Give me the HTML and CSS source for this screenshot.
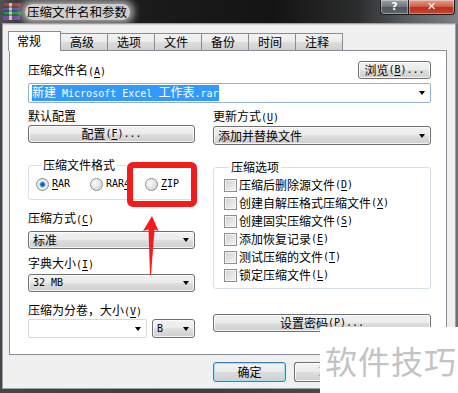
FILE: index.html
```html
<!DOCTYPE html>
<html lang="zh-CN">
<head>
    <meta charset="UTF-8">
    <title>压缩文件名和参数</title>
    <link rel="stylesheet" href="styles.css">
</head>
<body>
    <div class="window">
        <div class="titlebar">
            <svg class="app-icon" width="19" height="17" viewBox="0 0 19 17">
                <rect x="1" y="0" width="17" height="4" fill="#a8443a"/>
                <rect x="0" y="4" width="17" height="4" fill="#3f5fc0"/>
                <rect x="1" y="8" width="17" height="4" fill="#2f9446"/>
                <rect x="0" y="12" width="17" height="5" fill="#7a4aa8"/>
                <rect x="6" y="0" width="3" height="17" fill="#e8d9a0" opacity="0.85"/>
                <path d="M0 4h17M1 8h17M0 12h17" stroke="#222" stroke-width="0.7"/>
            </svg>
            <span class="title">压缩文件名和参数</span>
            <div class="caption">
                <span class="cap-btn help">?</span>
                <span class="cap-btn close">✕</span>
            </div>
        </div>

        <div class="client">
            <div class="tabs">
                <div class="tab active">常规</div>
                <div class="tab">高级</div>
                <div class="tab">选项</div>
                <div class="tab">文件</div>
                <div class="tab">备份</div>
                <div class="tab">时间</div>
                <div class="tab">注释</div>
            </div>

            <div class="panel">
                <div class="name-row">
                    <span class="label">压缩文件名<span class="m">(<u>A</u>)</span></span>
                    <div class="btn browse">浏览<span class="m">(<u>B</u>)...</span></div>
                </div>
                <div class="combo edit focus">
                    <span class="sel">新建<span class="m"> Microsoft Excel </span>工作表<span class="m">.rar</span></span>
                    <span class="arrow"></span>
                </div>

                <div class="cols">
                    <div class="col">
                        <div class="label first">默认配置</div>
                        <div class="btn profile">配置<span class="m">(<u>F</u>)...</span></div>

                        <fieldset class="group format">
                            <legend>压缩文件格式</legend>
                            <div class="radios">
                                <span class="radio-item w54"><span class="radio on"></span><span class="m"><u>R</u>AR</span></span>
                                <span class="radio-item w55"><span class="radio"></span><span class="m">RAR<u>4</u></span></span>
                                <span class="radio-item"><span class="radio"></span><span class="m"><u>Z</u>IP</span></span>
                            </div>
                        </fieldset>

                        <div class="label after-group">压缩方式<span class="m">(<u>C</u>)</span></div>
                        <div class="combo drop">标准<span class="arrow"></span></div>

                        <div class="label mid">字典大小<span class="m">(<u>I</u>)</span></div>
                        <div class="combo drop tight"><span class="m">32 MB</span><span class="arrow"></span></div>

                        <div class="label after-dict">压缩为分卷，大小<span class="m">(<u>V</u>)</span></div>
                        <div class="volume-row">
                            <div class="combo edit plain vol"><span class="arrow"></span></div>
                            <div class="combo drop unit"><span class="m">B</span><span class="arrow"></span></div>
                        </div>
                    </div>

                    <div class="col">
                        <div class="label first">更新方式<span class="m">(<u>U</u>)</span></div>
                        <div class="combo drop update">添加并替换文件<span class="arrow"></span></div>

                        <fieldset class="group options">
                            <legend>压缩选项</legend>
                            <div class="check-row"><span class="check"></span>压缩后删除源文件<span class="m">(<u>D</u>)</span></div>
                            <div class="check-row"><span class="check"></span>创建自解压格式压缩文件<span class="m">(<u>X</u>)</span></div>
                            <div class="check-row"><span class="check"></span>创建固实压缩文件<span class="m">(<u>S</u>)</span></div>
                            <div class="check-row"><span class="check"></span>添加恢复记录<span class="m">(<u>E</u>)</span></div>
                            <div class="check-row"><span class="check"></span>测试压缩的文件<span class="m">(<u>T</u>)</span></div>
                            <div class="check-row"><span class="check"></span>锁定压缩文件<span class="m">(<u>L</u>)</span></div>
                        </fieldset>

                        <div class="btn password">设置密码<span class="m">(<u>P</u>)...</span></div>
                    </div>
                </div>
            </div>

            <!-- the rest of the row is hidden under the watermark -->
            <div class="dialog-btns">
                <div class="btn dlg default">确定</div>
                <div class="btn dlg cancel">取消</div>
            </div>
        </div>

        <!-- annotation drawn over the screenshot -->
        <div class="highlight"></div>
        <svg class="pointer" width="20" height="62" viewBox="0 0 20 62">
            <polygon points="10,0 16.5,15 12.5,13.5 9,59 8,59 6.5,13.5 1,15" fill="#f21c1c"/>
        </svg>
        <div class="watermark">软件技巧</div>
    </div>
</body>
</html>
```

FILE: styles.css
```css
* {
    box-sizing: border-box;
}

body {
    margin: 0;
    width: 458px;
    height: 393px;
    overflow: hidden;
    font-family: "Noto Sans CJK SC", sans-serif;
    font-size: 12px;
    line-height: 14px;
    color: #000;
}

.m {
    font-family: "DejaVu Sans Mono", "Liberation Mono", monospace;
    font-size: 10px;
}

u {
    text-decoration-thickness: 1px;
    text-underline-offset: 2px;
}

.window {
    position: relative;
    width: 458px;
    height: 393px;
    display: flex;
    flex-direction: column;
    background: linear-gradient(90deg, #44474a 0%, #3a3c3e 40%, #4c4f52 80%, #6d7175 100%);
}

/* title bar */
.titlebar {
    height: 24px;
    display: flex;
    align-items: flex-start;
    background: linear-gradient(90deg, #505254 0%, #2c2c2c 6%, #1a1a1a 35%, #141414 60%, #2b2c2d 78%, #5d6165 90%, #7c8085 100%);
}

.app-icon {
    margin: 3px 2px 0 3px;
    flex: none;
}

.title {
    margin: 4px 0 0 1px;
    padding: 0 3px 1px 2px;
    font-size: 12.5px;
    line-height: 15px;
    color: #000;
    border-radius: 7px;
    background: rgba(222, 222, 222, 0.92);
    box-shadow: 0 0 7px 4px rgba(205, 205, 205, 0.75);
}

.caption {
    margin-left: auto;
    margin-right: 3px;
    display: flex;
}

.cap-btn {
    height: 15px;
    display: flex;
    align-items: center;
    justify-content: center;
    color: #fff;
    font-family: "DejaVu Sans", sans-serif;
    font-weight: bold;
    border: 1px solid #1c1c1c;
    border-top: none;
    box-shadow: inset 0 0 0 1px rgba(255, 255, 255, 0.35);
}

.help {
    width: 28px;
    font-size: 11px;
    border-radius: 0 0 0 4px;
    border-right: none;
    background: linear-gradient(#9aa0a6, #6e747a 50%, #50565c 51%, #5e656c);
}

.close {
    width: 47px;
    font-size: 11px;
    border-radius: 0 0 4px 0;
    background: linear-gradient(#e3a08f, #cf5a44 50%, #b8321c 51%, #c9442c);
}

/* client area */
.client {
    flex: 1;
    margin: 0 3px 5px 3px;
    background: #f0f0f0;
    border-top: 1px solid #d4d4d4;
    box-shadow: 0 0 0 1px #9da1a5;
}

.tabs {
    height: 25px;
    margin-left: 5px;
    display: flex;
    align-items: flex-end;
}

.tab {
    width: 48px;
    height: 17px;
    margin-left: -1px;
    padding-left: 9px;
    line-height: 16px;
    border: 1px solid #898c95;
    border-bottom: none;
    background: linear-gradient(#f3f3f3, #ebebeb 50%, #dddddd 51%, #cfcfcf);
}

.tab.active {
    width: 53px;
    height: 20px;
    margin-left: 0;
    margin-bottom: -1px;
    padding-left: 8px;
    line-height: 17px;
    background: #fff;
    position: relative;
    z-index: 1;
}

.panel {
    width: 438px;
    height: 305px;
    margin-left: 6px;
    padding: 10px 15px 0 18px;
    background: #fff;
    border: 1px solid #898c95;
}

.name-row {
    height: 18px;
    display: flex;
    justify-content: space-between;
    align-items: flex-start;
}

.name-row .label {
    margin-top: 2px;
}

/* buttons */
.btn {
    height: 18px;
    display: flex;
    align-items: center;
    justify-content: center;
    border: 1px solid #707070;
    border-radius: 3px;
    background: linear-gradient(#f2f2f2, #ebebeb 48%, #dddddd 52%, #cfcfcf);
    box-shadow: inset 0 0 0 1px rgba(255, 255, 255, 0.75);
}

.browse {
    width: 73px;
}

.profile {
    margin-top: 2px;
}

.password {
    margin-top: 25px;
}

/* combo boxes */
.combo {
    display: flex;
    align-items: center;
    padding-left: 3px;
    border-radius: 2px;
}

.combo.edit {
    height: 20px;
    margin-top: 4px;
    background: #fff;
    border: 1px solid #abb9c8;
}

.combo.focus {
    border-color: #8fb0d0;
}

.combo.plain {
    border-color: #d6d8db;
}

.combo.drop {
    height: 18px;
    padding-left: 4px;
    border: 1px solid #707070;
    border-radius: 3px;
    background: linear-gradient(#f2f2f2, #ebebeb 48%, #dddddd 52%, #cfcfcf);
    box-shadow: inset 0 0 0 1px rgba(255, 255, 255, 0.75);
}

.arrow {
    margin-left: auto;
    margin-right: 5px;
    width: 0;
    height: 0;
    border-left: 3.5px solid transparent;
    border-right: 3.5px solid transparent;
    border-top: 4px solid #000;
}

.sel {
    background: #3399ff;
    color: #fff;
    line-height: 14px;
    padding-right: 1px;
}

.cols {
    display: grid;
    grid-template-columns: 167px 218px;
    column-gap: 18px;
}

.col {
    display: flex;
    flex-direction: column;
}

.label.first {
    margin-top: 6px;
}

.combo.update {
    height: 19px;
    margin-top: 1px;
}

.label.after-group {
    margin-top: 11px;
}

.label.after-group + .combo {
    margin-top: 4px;
}

.label.mid {
    margin-top: 7px;
}

.combo.tight {
    margin-top: 2px;
}

.label.after-dict {
    margin-top: 11px;
}

.volume-row {
    display: flex;
    gap: 5px;
}

.combo.vol {
    width: 119px;
    height: 19px;
    margin-top: 0;
}

.combo.unit {
    width: 43px;
    height: 19px;
}

/* group boxes */
.group {
    margin: 15px 0 0 0;
    padding: 0;
    min-width: 0;
    border: 1px solid #d5dfe5;
    border-radius: 3px;
}

.group legend {
    margin-left: 5px;
    padding: 0 2px;
    line-height: 14px;
}

.format {
    padding: 5px 0 8px 7px;
}

.options {
    padding: 2px 0 4px 10px;
}

.radios {
    display: flex;
    align-items: center;
    height: 14px;
}

.radio-item {
    display: flex;
    align-items: center;
    gap: 3px;
}

.w54 {
    width: 54px;
}

.w55 {
    width: 55px;
}

.radio {
    width: 13px;
    height: 13px;
    border-radius: 50%;
    border: 1px solid #8e8f8f;
    background: radial-gradient(circle at 35% 35%, #fdfdfd 0%, #e6e6e6 45%, #c6c8cb 100%);
}

.radio.on {
    background: radial-gradient(circle, #0e4a84 0%, #1f6fb8 22%, #74b8ec 34%, #eef4f9 45%, #e2e2e2 70%, #c6c8cb 100%);
}

.check-row {
    height: 18px;
    display: flex;
    align-items: center;
}

.check {
    width: 13px;
    height: 13px;
    margin-right: 2px;
    border: 1px solid #8e8f8f;
    background: linear-gradient(135deg, #cbcfd5, #f6f6f6);
    box-shadow: inset 0 0 0 1px #f4f4f4;
}

/* dialog buttons: the row stops where the watermark starts */
.dialog-btns {
    display: flex;
    gap: 8px;
    width: 317px;
    margin-top: 7px;
    padding-left: 210px;
    overflow: hidden;
}

.btn.dlg {
    flex: none;
    width: 73px;
    height: 20px;
}

.btn.cancel {
    justify-content: flex-start;
    padding-left: 24px;
    border-right: none;
    border-radius: 3px 0 0 3px;
}

.btn.default {
    border-color: #3c7fb1;
    box-shadow: inset 0 0 0 1px #9fe0f6;
}

/* red annotation over the screenshot */
.highlight {
    position: absolute;
    left: 127px;
    top: 162px;
    width: 70px;
    height: 45px;
    border: 6px solid #f21c1c;
    border-radius: 6px;
}

.pointer {
    position: absolute;
    left: 142px;
    top: 216px;
}

.watermark {
    position: absolute;
    left: 320px;
    top: 327px;
    right: 0;
    bottom: 0;
    padding-left: 5px;
    display: flex;
    align-items: center;
    background: #fff;
    color: #c3c3c3;
    font-size: 32px;
    line-height: 40px;
    letter-spacing: 1px;
}
```
